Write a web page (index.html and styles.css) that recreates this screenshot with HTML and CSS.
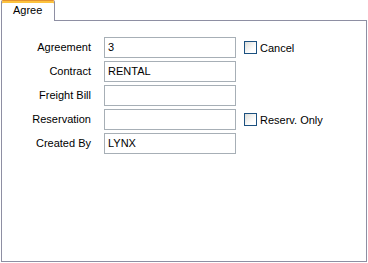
FILE: index.html
```html
<!DOCTYPE html>
<html>
<head>
<meta charset="utf-8">
<link rel="stylesheet" href="styles.css">
</head>
<body>
<div class="root">
  <div class="tabstrip">
    <div class="tab">Agree</div>
    <div class="tab-fill"></div>
  </div>
  <div class="panel">
    <div class="form">
      <div class="lbl">Agreement</div>
      <div class="field">3</div>
      <div class="check"><span class="box"></span><span>Cancel</span></div>

      <div class="lbl">Contract</div>
      <div class="field">RENTAL</div>
      <div></div>

      <div class="lbl">Freight Bill</div>
      <div class="field"></div>
      <div></div>

      <div class="lbl">Reservation</div>
      <div class="field"></div>
      <div class="check"><span class="box"></span><span>Reserv. Only</span></div>

      <div class="lbl">Created By</div>
      <div class="field">LYNX</div>
      <div></div>
    </div>
  </div>
</div>
</body>
</html>
```
FILE: styles.css
```css
html, body {
  margin: 0;
  padding: 0;
  background: #ffffff;
}
body {
  font-family: "Liberation Sans", Arial, sans-serif;
  font-size: 11px;
  color: #000000;
  width: 368px;
  height: 263px;
  overflow: hidden;
}
.root {
  padding: 0 1px;
  width: 366px;
}
.tabstrip {
  display: flex;
  height: 21px;
}
.tab {
  height: 18px;
  border-left: 1px solid #8e8fa3;
  border-right: 1px solid #8e8fa3;
  border-top: 1px solid #e3912f;
  border-radius: 2px 2px 0 0;
  box-shadow: inset 0 2px 0 #fcc23d;
  padding-top: 2px;
  padding-left: 11px;
  width: 41px;
  line-height: 15px;
  background: #ffffff;
}
.tab-fill {
  flex: 1;
  border-bottom: 1px solid #8e8fa3;
}
.panel {
  border-left: 1px solid #8e8fa3;
  border-right: 1px solid #8e8fa3;
  border-bottom: 1px solid #8e8fa3;
  padding-top: 16px;
  box-sizing: border-box;
  height: 241px;
}
.form {
  display: grid;
  grid-template-columns: 102px 132px auto;
  grid-auto-rows: 21px;
  row-gap: 3px;
  align-items: center;
}
.lbl {
  text-align: right;
  line-height: 21px;
  padding-right: 13px;
}
.field {
  height: 21px;
  box-sizing: border-box;
  border: 1px solid #a7afb6;
  padding: 0 3px;
  line-height: 19px;
  background: #ffffff;
}
.check {
  display: flex;
  align-items: center;
  gap: 3px;
  padding-left: 8px;
}
.box {
  width: 13px;
  height: 13px;
  box-sizing: border-box;
  border: 1px solid #1c5180;
  background: linear-gradient(135deg, #dcdcd8 0%, #f4f4f2 45%, #ffffff 70%);
}
```
